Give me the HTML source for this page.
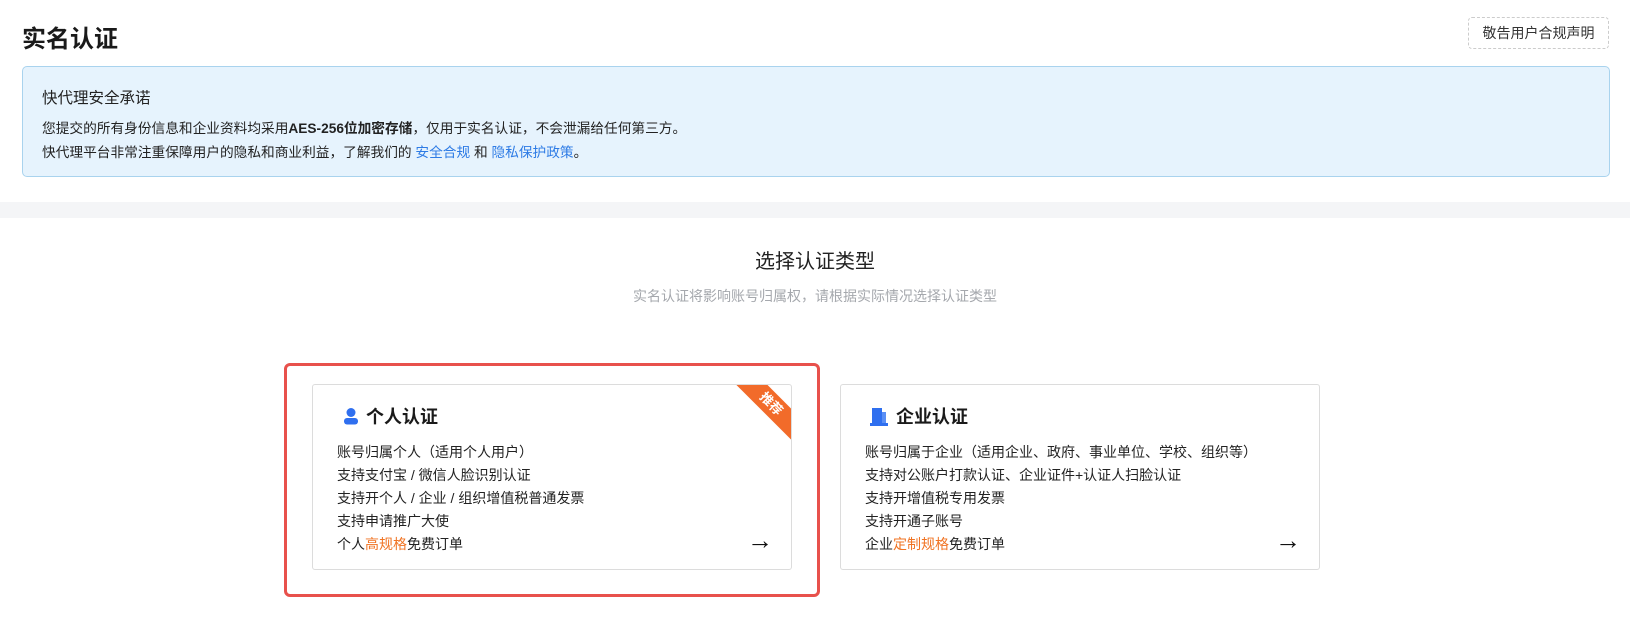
<!DOCTYPE html>
<html><head><meta charset="utf-8"><style>
*{margin:0;padding:0;box-sizing:border-box}
body{width:1630px;height:642px;background:#fff;font-family:"Liberation Sans","Noto Sans CJK SC",sans-serif;color:#222;position:relative;overflow:hidden}
h1{position:absolute;left:22px;top:19px;font-size:24px;font-weight:bold;color:#1a1a1a}
.btn{position:absolute;left:1468px;top:17px;width:141px;height:32px;border:1px dashed #ccc;border-radius:4px;font-size:14px;line-height:30px;text-align:center;color:#333}
.notice{position:absolute;left:22px;top:66px;width:1588px;height:111px;background:#e6f3fd;border:1px solid #a9d3ee;border-radius:5px}
.notice .t{position:absolute;left:19px;top:19px;font-size:15.5px;color:#222}
.notice .l{position:absolute;left:19px;font-size:13.7px;color:#222}
.notice a{color:#2d7be5;text-decoration:none}
.band{position:absolute;left:0;top:202px;width:1630px;height:16px;background:#f4f5f7}
.h2{position:absolute;left:0;width:1630px;text-align:center;top:245px;font-size:20px;color:#222}
.sub{position:absolute;left:0;width:1630px;text-align:center;top:286px;font-size:14px;color:#a5a8ad}
.red{position:absolute;left:284px;top:363px;width:536px;height:234px;border:3px solid #e8514c;border-radius:6px}
.card{position:absolute;top:384px;width:480px;height:186px;border:1px solid #dcdcdc;border-radius:3px;background:#fff;overflow:hidden}
.card .ti{position:absolute;left:29px;top:18px;font-size:18px;font-weight:bold;color:#1a1a1a;display:flex;align-items:center}
.card .ls{position:absolute;left:24px;top:56px;font-size:14px;line-height:23px;color:#222}
.or{color:#f07322}
.arr{position:absolute;right:18px;top:140px;font-size:26px;color:#111;font-weight:bold}
.rib{position:absolute;right:-40px;top:8px;width:120px;height:22px;background:#f26b2a;transform:rotate(45deg);color:#fff;font-size:13px;line-height:22px;text-align:center;font-weight:bold}
</style></head><body>
<h1>实名认证</h1>
<div class="btn">敬告用户合规声明</div>
<div class="notice">
<div class="t">快代理安全承诺</div>
<div class="l" style="top:50px">您提交的所有身份信息和企业资料均采用<b>AES-256位加密存储</b>，仅用于实名认证，不会泄漏给任何第三方。</div>
<div class="l" style="top:74px">快代理平台非常注重保障用户的隐私和商业利益，了解我们的 <a>安全合规</a> 和 <a>隐私保护政策</a>。</div>
</div>
<div class="band"></div>
<div class="h2">选择认证类型</div>
<div class="sub">实名认证将影响账号归属权，请根据实际情况选择认证类型</div>
<div class="red"></div>
<div class="card" style="left:312px">
<div class="rib">推荐</div>
<div class="ti"><svg width="18" height="18" viewBox="0 0 18 18" style="margin-right:6px"><circle cx="9" cy="5.5" r="4.5" fill="#2f6fef"/><rect x="2" y="11" width="14" height="6.5" rx="3" fill="#2f6fef"/></svg>个人认证</div>
<div class="ls">账号归属个人（适用个人用户）<br>支持支付宝 / 微信人脸识别认证<br>支持开个人 / 企业 / 组织增值税普通发票<br>支持申请推广大使<br>个人<span class="or">高规格</span>免费订单</div>
<div class="arr">→</div>
</div>
<div class="card" style="left:840px">
<div class="ti"><svg width="18" height="19" viewBox="0 0 18 19" style="margin-right:8px"><rect x="2" y="1" width="10" height="16" fill="#2f6fef"/><rect x="12" y="5" width="4" height="12" fill="#5a8ff5"/><rect x="0" y="16" width="18" height="3" fill="#2f6fef"/></svg>企业认证</div>
<div class="ls">账号归属于企业（适用企业、政府、事业单位、学校、组织等）<br>支持对公账户打款认证、企业证件+认证人扫脸认证<br>支持开增值税专用发票<br>支持开通子账号<br>企业<span class="or">定制规格</span>免费订单</div>
<div class="arr">→</div>
</div>
</body></html>
